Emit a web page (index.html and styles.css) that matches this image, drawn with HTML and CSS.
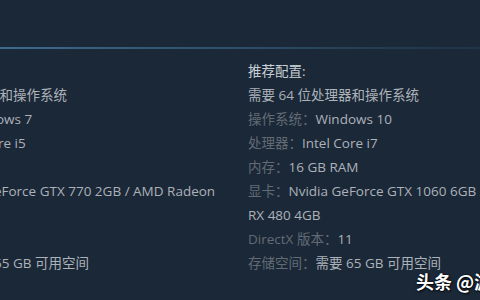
FILE: index.html
```html
<!DOCTYPE html>
<html lang="zh-CN">
<head>
<meta charset="utf-8">
<title>系统需求</title>
<link rel="stylesheet" href="styles.css">
</head>
<body>
<section class="sysreq">
  <h2 class="sysreq-title">系统需求</h2>
  <div class="sysreq-cols">
    <div class="sysreq-col">
      <p class="col-title">最低配置:</p>
      <ul class="req-list">
        <li>需要 64 位处理器和操作系统</li>
        <li><span class="label">操作系统：</span>Windows 7</li>
        <li><span class="label">处理器：</span>Intel Core i5</li>
        <li><span class="label">内存：</span>8 GB RAM</li>
        <li><span class="label">显卡：</span>NVIDIA GeForce GTX 770 2GB / AMD Radeon R9 280</li>
        <li><span class="label">DirectX 版本：</span>11</li>
        <li><span class="label">存储空间：</span>需要 65 GB 可用空间</li>
      </ul>
    </div>
    <div class="sysreq-col">
      <p class="col-title">推荐配置:</p>
      <ul class="req-list">
        <li>需要 64 位处理器和操作系统</li>
        <li><span class="label">操作系统：</span>Windows 10</li>
        <li><span class="label">处理器：</span>Intel Core i7</li>
        <li><span class="label">内存：</span>16 GB RAM</li>
        <li><span class="label">显卡：</span>Nvidia GeForce GTX 1060 6GB / AMD Radeon RX 480 4GB</li>
        <li><span class="label">DirectX 版本：</span>11</li>
        <li><span class="label">存储空间：</span>需要 65 GB 可用空间</li>
      </ul>
    </div>
  </div>
</section>
<div class="watermark">头条 @游戏君</div>
</body>
</html>
```

FILE: styles.css
```css
html, body {
  margin: 0;
  padding: 0;
  background: #1b2838;
  overflow: hidden;
}

body {
  width: 480px;
  height: 300px;
  position: relative;
  font-family: "Open Sans", "Noto Sans CJK SC", sans-serif;
  font-size: 13.5px;
  color: #acb2b8;
}

.sysreq {
  margin-left: -104px;
  width: 700px;
}

.sysreq-title {
  margin: 0;
  padding-top: 24px;
  padding-bottom: 2px;
  line-height: 23px;
  font-size: 14px;
  font-weight: normal;
  color: #ffffff;
  background-image: linear-gradient(to right, #46769a 0%, #3a6787 20%, rgba(36, 60, 82, 1) 70%, rgba(27, 40, 56, 0.4) 100%);
  background-repeat: no-repeat;
  background-position: left bottom;
  background-size: 100% 2px;
}

.sysreq-cols {
  display: grid;
  grid-template-columns: 332px 332px;
  column-gap: 20px;
  margin-top: 10px;
  line-height: 24px;
}

.col-title {
  margin: 0;
  color: #c9d0d6;
}

.req-list {
  list-style: none;
  margin: 0;
  padding: 0;
}

.label {
  color: #626b74;
}

.watermark {
  position: absolute;
  left: 416px;
  top: 269px;
  white-space: nowrap;
  font-family: "Noto Sans CJK SC", sans-serif;
  font-size: 18px;
  font-weight: bold;
  line-height: 24px;
  color: #ffffff;
  text-shadow: 0 0 2px rgba(0, 0, 0, 0.9), 1px 1px 2px rgba(0, 0, 0, 0.8);
}
```
